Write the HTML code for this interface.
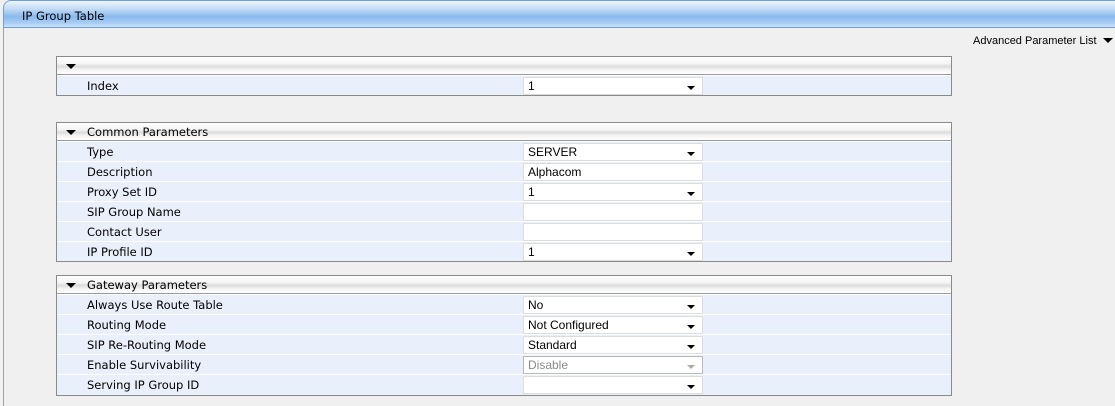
<!DOCTYPE html>
<html><head><meta charset="utf-8"><style>
*{margin:0;padding:0;box-sizing:border-box}
body{width:1115px;height:406px;background:#f0f0f0;position:relative;overflow:hidden;font-family:"DejaVu Sans",Verdana,sans-serif;font-size:11.5px;color:#000}
.hdr{position:absolute;left:3px;top:0;width:1115px;height:28px;border-top-left-radius:8px;border:1px solid #6f9fd6;border-right:none;background:linear-gradient(#eef5fd 0%,#c4dcf6 30%,#8ab9ee 60%,#a9cdf4 85%,#cfe2f8 100%)}
.hdr span{position:absolute;left:18px;top:8px;font-size:11.5px}
.lb{position:absolute;left:3px;top:27px;width:1px;height:379px;background:#a0a0a0}
.adv{position:absolute;left:973px;top:35px;font-family:"Liberation Sans",Arial,sans-serif;font-size:11px}
.adv i{display:inline-block;width:0;height:0;border-left:5px solid transparent;border-right:5px solid transparent;border-top:5px solid #000;margin-left:6px;vertical-align:1px}
.tb{position:absolute;left:56px;width:896px;border:1px solid #8a8a8a;background:#eaf0fb}
.th{height:18px;background:linear-gradient(#fff 0%,#f4f4f4 40%,#dcdcdc 55%,#f4f4f4 75%,#fff 100%);position:relative;border-bottom:1px solid #9a9a9a}
.th i{position:absolute;left:9px;top:7px;width:0;height:0;border-left:5px solid transparent;border-right:5px solid transparent;border-top:5px solid #000}
.th span{position:absolute;left:30px;top:2px}
.r{height:20px;position:relative;border-top:1px solid #fff}
.r:first-of-type{border-top:none;height:19px}
.r span{position:absolute;left:30px;top:3px}
.in{position:absolute;left:466px;top:1px;width:180px;height:18px;background:#fff;border:1px solid #dcdcdc;font-family:"Liberation Sans",Arial,sans-serif;font-size:12px;padding:1px 0 0 4px}
.in.s::after{content:"";position:absolute;right:7px;top:8px;border-left:4px solid transparent;border-right:4px solid transparent;border-top:4px solid #000}
.in.d{border-color:#b8b8b8;color:#8a8a8a}
.in.d::after{border-top-color:#aaa}
</style></head><body>
<div class="hdr"><span>IP Group Table</span></div>
<div class="lb"></div>
<div class="adv">Advanced Parameter List<i></i></div>

<div class="tb" style="top:56px;height:40px">
<div class="th"><i></i></div>
<div class="r"><span>Index</span><div class="in s">1</div></div>
</div>

<div class="tb" style="top:122px;height:140px">
<div class="th"><i></i><span>Common Parameters</span></div>
<div class="r"><span>Type</span><div class="in s">SERVER</div></div>
<div class="r"><span>Description</span><div class="in">Alphacom</div></div>
<div class="r"><span>Proxy Set ID</span><div class="in s">1</div></div>
<div class="r"><span>SIP Group Name</span><div class="in"></div></div>
<div class="r"><span>Contact User</span><div class="in"></div></div>
<div class="r"><span>IP Profile ID</span><div class="in s">1</div></div>
</div>

<div class="tb" style="top:275px;height:121px">
<div class="th"><i></i><span>Gateway Parameters</span></div>
<div class="r"><span>Always Use Route Table</span><div class="in s">No</div></div>
<div class="r"><span>Routing Mode</span><div class="in s">Not Configured</div></div>
<div class="r"><span>SIP Re-Routing Mode</span><div class="in s">Standard</div></div>
<div class="r"><span>Enable Survivability</span><div class="in s d">Disable</div></div>
<div class="r"><span>Serving IP Group ID</span><div class="in s"></div></div>
</div>
</body></html>
